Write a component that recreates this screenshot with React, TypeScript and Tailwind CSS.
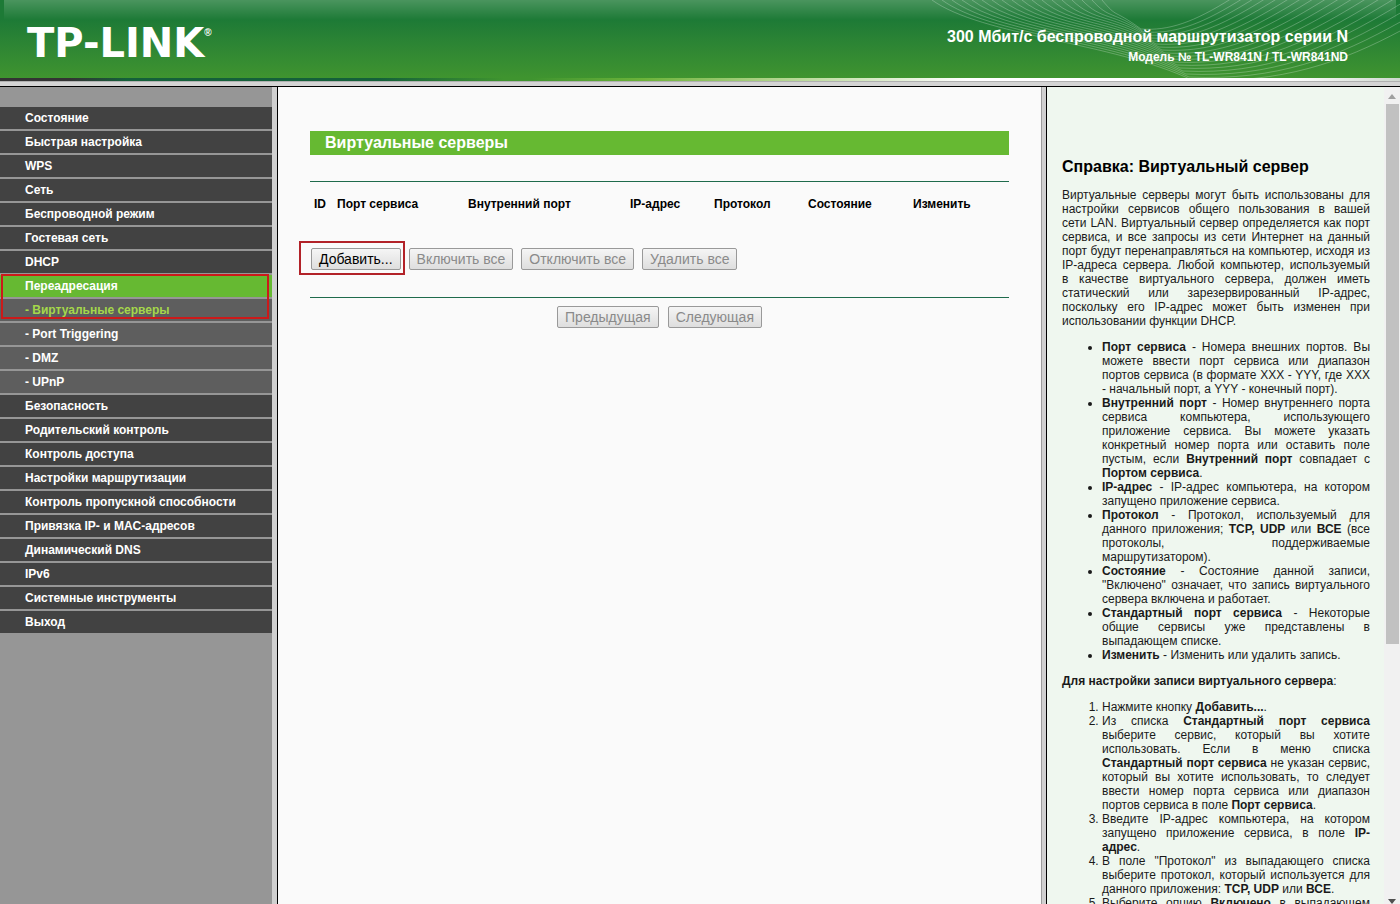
import type { ReactNode } from "react";

interface MenuItem {
  label: string;
  sub?: boolean;
  open?: boolean;
  active?: boolean;
}

const menu: MenuItem[] = [
  { label: "Состояние" },
  { label: "Быстрая настройка" },
  { label: "WPS" },
  { label: "Сеть" },
  { label: "Беспроводной режим" },
  { label: "Гостевая сеть" },
  { label: "DHCP" },
  { label: "Переадресация", open: true },
  { label: "- Виртуальные серверы", sub: true, active: true },
  { label: "- Port Triggering", sub: true },
  { label: "- DMZ", sub: true },
  { label: "- UPnP", sub: true },
  { label: "Безопасность" },
  { label: "Родительский контроль" },
  { label: "Контроль доступа" },
  { label: "Настройки маршрутизации" },
  { label: "Контроль пропускной способности" },
  { label: "Привязка IP- и MAC-адресов" },
  { label: "Динамический DNS" },
  { label: "IPv6" },
  { label: "Системные инструменты" },
  { label: "Выход" },
];

const columns = [
  { label: "ID", width: "w-[23px]" },
  { label: "Порт сервиса", width: "w-[131px]" },
  { label: "Внутренний порт", width: "w-[162px]" },
  { label: "IP-адрес", width: "w-[84px]" },
  { label: "Протокол", width: "w-[94px]" },
  { label: "Состояние", width: "w-[105px]" },
  { label: "Изменить", width: "w-[100px]" },
];

// Each wave drops from the top edge, bottoms out near the middle and rises to the right
const waves = Array.from({ length: 18 }, (_, i) => {
  const start = 12 + i * 10;
  const x = 272 - i * 3;
  const y = 80 - i * 3;
  return `M${start} 0C${start + 50 - i * 2} ${36 - i} ${x - 80 + i * 3} ${y - 38 + i} ${x} ${y}C${x + 90 - i * 2} ${y + 4} ${x + 150 - i * 3} ${y - 18 - i} 482 ${30 - i * 9}`;
});

function Header() {
  return (
    <header className="shrink-0 border-b border-black bg-[#d4d4d4] pb-1">
      <div className="relative h-[78px] overflow-hidden bg-linear-to-b from-[#1d7a36] from-25% to-[#3f942f] px-[27px]">
        <div className="absolute inset-x-1 top-0 h-5 bg-linear-to-b from-white/20 to-transparent" />
        <svg
          className="absolute top-0 right-0 h-[78px] w-[480px]"
          viewBox="0 0 480 78"
          fill="none"
          stroke="#fff"
          strokeOpacity="0.25"
        >
          {waves.map((d) => (
            <path key={d} d={d} />
          ))}
        </svg>
        <div className="relative flex items-start justify-between">
          <a href="#" className="flex items-start pt-6 text-white">
            <span className="font-['DejaVu_Sans',sans-serif] text-[40px] leading-[38px] font-bold">TP-LINK</span>
            <span className="pt-[3px] text-[10px] leading-3 font-bold">®</span>
          </a>
          <div className="pt-[27px] pr-[25px] text-right font-bold text-white">
            <h1 className="text-[16px] leading-5">300 Мбит/с беспроводной маршрутизатор серии N</h1>
            <p className="text-[12px] leading-5">Модель № TL-WR841N / TL-WR841ND</p>
          </div>
        </div>
      </div>
      <div className="h-1 border-b border-[#b0b0b0] bg-[linear-gradient(90deg,#333_0%,#333_5%,#14603a_9%,#14603a_27%,#3f942f_36%,#3f942f_38%,#6cb33a_46%,#a8cf80_54%,#fff_69%,#fff_92%,#cfd8cf_100%)]" />
    </header>
  );
}

function Sidebar() {
  return (
    <nav className="w-[278px] shrink-0 overflow-hidden border-r border-black bg-[#d0d0d0] pr-[5px]">
      <ul className="h-full bg-[#969696] pt-5">
        {menu.map((item) => (
          <li key={item.label} className="relative mb-[2px]">
            <a
              href="#"
              className={`block h-[22px] pl-[25px] text-[12px] leading-[22px] font-bold ${
                item.open ? "bg-[#66b932]" : item.sub ? "bg-[#5e5e5e]" : "bg-[#424242]"
              } ${item.active ? "text-[#a5d84a]" : "text-white"}`}
            >
              {item.label}
            </a>
            {item.open && (
              <span className="pointer-events-none absolute -top-px right-[3px] left-px z-10 h-[45px] border-2 border-[#cc1a1a]" />
            )}
          </li>
        ))}
      </ul>
    </nav>
  );
}

function Button({ children, disabled }: { children: ReactNode; disabled?: boolean }) {
  return (
    <button
      type="button"
      disabled={disabled}
      className="h-[22px] rounded-[2px] border border-[#999] bg-linear-to-b from-[#f5f5f5] to-[#dedede] px-[7px] text-[14px] leading-5 whitespace-nowrap text-black disabled:text-[#8a8a8a]"
    >
      {children}
    </button>
  );
}

function VirtualServers() {
  return (
    <main className="min-w-0 flex-1 overflow-hidden bg-[#fafafa] px-8 pt-11">
      <h2 className="h-6 bg-[#66b932] pl-[15px] text-[16px] leading-6 font-bold text-white">Виртуальные серверы</h2>
      <div className="mt-[26px] border-y border-[#1f6b4c] pb-[27px]">
        <table className="w-full table-fixed text-left text-[12px] leading-4">
          <thead>
            <tr>
              {columns.map((column) => (
                <th key={column.label} scope="col" className={`${column.width} pt-[14px] pl-1 whitespace-nowrap`}>
                  {column.label}
                </th>
              ))}
            </tr>
          </thead>
        </table>
        <div className="mt-9 flex gap-2">
          <div className="relative flex pl-px">
            <Button>Добавить...</Button>
            <span className="pointer-events-none absolute -top-[7px] -right-1 -left-[11px] h-[34px] border-2 border-[#b22228]" />
          </div>
          <Button disabled>Включить все</Button>
          <Button disabled>Отключить все</Button>
          <Button disabled>Удалить все</Button>
        </div>
      </div>
      <div className="mt-2 flex justify-center gap-[9px]">
        <Button disabled>Предыдущая</Button>
        <Button disabled>Следующая</Button>
      </div>
    </main>
  );
}

function Help() {
  return (
    <aside className="flex w-[359px] shrink-0 border-l border-[#9c9c9c] bg-[#d0d0d0] pl-1">
      <div className="flex min-w-0 flex-1 overflow-hidden border-l border-black bg-[#eff7ef]">
        <div className="min-w-0 flex-1 pt-[70px] pr-[14px] pl-[15px] text-justify text-[12px] leading-[14px] text-[#1a1a1a]">
          <h2 className="text-[16px] leading-5 font-bold text-black">Справка: Виртуальный сервер</h2>
          <p className="mt-[11px]">
            Виртуальные серверы могут быть использованы для настройки сервисов общего пользования в вашей сети&nbsp;LAN.
            Виртуальный сервер определяется как порт сервиса, и все запросы из сети Интернет на данный порт будут
            перенаправляться на компьютер, исходя из IP-адреса сервера. Любой компьютер, используемый в качестве
            виртуального сервера, должен иметь статический или зарезервированный IP-адрес, поскольку его IP-адрес может
            быть изменен при использовании функции DHCP.
          </p>
          <ul className="mt-3 list-disc pl-10">
            <li>
              <b>Порт сервиса</b> - Номера внешних портов. Вы можете ввести порт сервиса или диапазон портов сервиса (в
              формате XXX - YYY, где XXX - начальный порт, а YYY - конечный порт).
            </li>
            <li>
              <b>Внутренний порт</b> - Номер внутреннего порта сервиса компьютера, использующего приложение сервиса. Вы
              можете указать конкретный номер порта или оставить поле пустым, если <b>Внутренний порт</b> совпадает с{" "}
              <b>Портом сервиса</b>.
            </li>
            <li>
              <b>IP-адрес</b> - IP-адрес компьютера, на котором запущено приложение сервиса.
            </li>
            <li>
              <b>Протокол</b> - Протокол, используемый для данного приложения; <b>TCP, UDP</b> или <b>ВСЕ</b> (все
              протоколы, поддерживаемые маршрутизатором).
            </li>
            <li>
              <b>Состояние</b> - Состояние данной записи, "Включено" означает, что запись виртуального сервера включена и
              работает.
            </li>
            <li>
              <b>Стандартный порт сервиса</b> - Некоторые общие сервисы уже представлены в выпадающем списке.
            </li>
            <li>
              <b>Изменить</b> - Изменить или удалить запись.
            </li>
          </ul>
          <p className="mt-3">
            <b>Для настройки записи виртуального сервера</b>:
          </p>
          <ol className="mt-3 list-decimal pl-10">
            <li>
              Нажмите кнопку <b>Добавить...</b>.
            </li>
            <li>
              Из списка <b>Стандартный порт сервиса</b> выберите сервис, который вы хотите использовать. Если в меню
              списка <b>Стандартный порт сервиса</b> не указан сервис, который вы хотите использовать, то следует ввести
              номер порта сервиса или диапазон портов сервиса в поле <b>Порт сервиса</b>.
            </li>
            <li>
              Введите IP-адрес компьютера, на котором запущено приложение сервиса, в поле <b>IP-адрес</b>.
            </li>
            <li>
              В поле "Протокол" из выпадающего списка выберите протокол, который используется для данного приложения:{" "}
              <b>TCP, UDP</b> или <b>ВСЕ</b>.
            </li>
            <li className="[text-align-last:justify]">
              Выберите опцию <b>Включено</b> в выпадающем
            </li>
          </ol>
        </div>
        <div className="flex w-4 shrink-0 flex-col items-center bg-[#f1f1f1] pt-[7px]">
          <svg className="h-[5px] w-2 shrink-0" viewBox="0 0 8 5" fill="#a0a0a0">
            <path d="M4 0 8 5H0z" />
          </svg>
          <div className="mt-[5px] h-2/3 w-[13px] bg-[#c1c1c1]" />
          <svg className="mt-auto h-[5px] w-2 shrink-0" viewBox="0 0 8 5" fill="#505050">
            <path d="M0 0h8L4 5z" />
          </svg>
        </div>
      </div>
    </aside>
  );
}

export default function App() {
  return (
    <div className="flex h-screen flex-col overflow-hidden font-['Liberation_Sans',Arial,sans-serif] text-black">
      <Header />
      <div className="flex min-h-0 flex-1">
        <Sidebar />
        <VirtualServers />
        <Help />
      </div>
    </div>
  );
}
